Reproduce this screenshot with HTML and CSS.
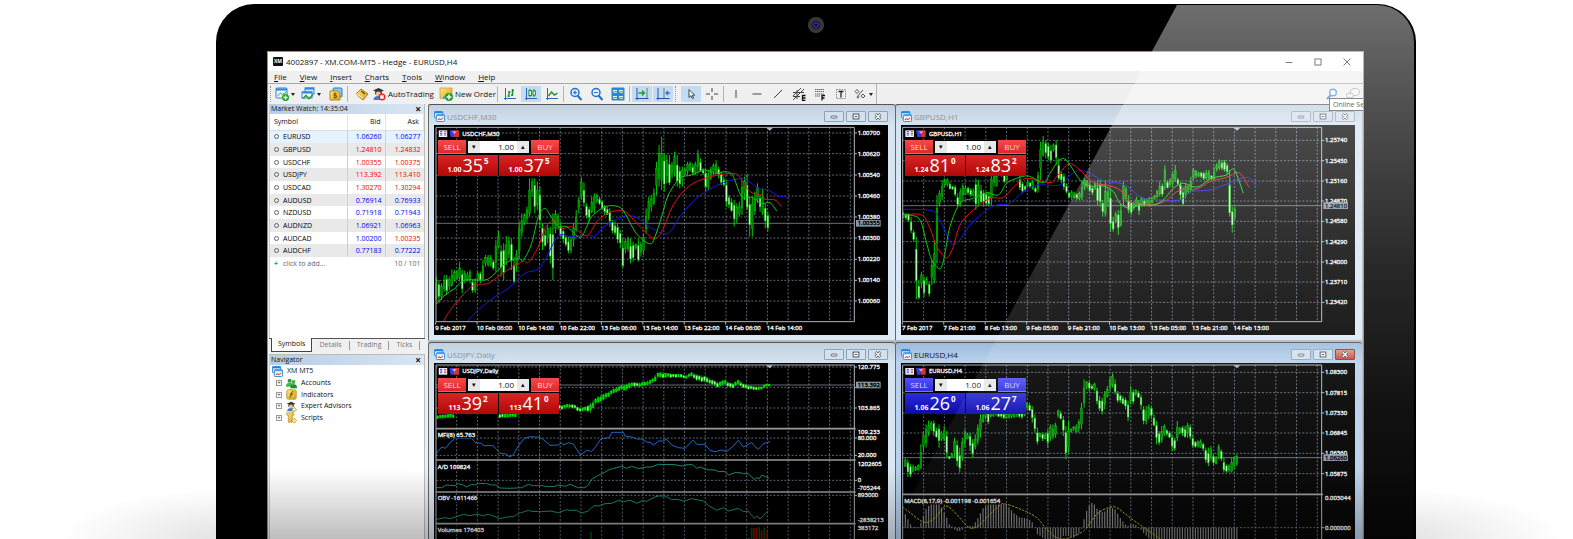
FILE: index.html
```
<!DOCTYPE html>
<html lang="en">
<head>
  <meta charset="UTF-8">
  <title>XM MT5 Terminal</title>
  <link rel="stylesheet" href="styles.css">
</head>
<body>
  <!-- shared icons -->
  <svg class="defs" aria-hidden="true">
    <defs>
      <linearGradient id="gold" x1="0" y1="0" x2="1" y2="1"><stop offset="0" stop-color="#ffe98a"/><stop offset="1" stop-color="#d9a014"/></linearGradient>
      <symbol id="i-win" viewBox="0 0 12 12">
        <rect x="0.5" y="0.5" width="9" height="7" rx="1" fill="#dff0ff" stroke="#2583dc"/><path d="M0.5 1.5h9" stroke="#2583dc" stroke-width="2"/>
        <rect x="2.5" y="4" width="9" height="7.5" rx="1" fill="#fff" stroke="#2583dc"/><path d="M2.5 5h9" stroke="#4aa5f0" stroke-width="1.6"/>
        <path d="M4 10l1.8-1.6 1.6 1.1L10 7.6" fill="none" stroke="#e0442c" stroke-width="1.1"/>
      </symbol>
      <symbol id="i-plus" viewBox="0 0 6 6"><circle cx="3" cy="3" r="3" fill="#1fa32b"/><path d="M3 1.2v3.6M1.2 3h3.6" stroke="#fff" stroke-width="1.1"/></symbol>
      <symbol id="i-expert" viewBox="0 0 14 14">
        <path d="M1 3.5L6.5 1l5.5 2.5L6.5 6z" fill="#333"/><path d="M3 4.5h7v3H3z" fill="#444"/><circle cx="6.3" cy="7" r="2.5" fill="#f0c190"/>
        <path d="M1.5 13c0-3 2-4 5-4s4 1 4 4z" fill="#3b7fd0"/>
      </symbol>
      <symbol id="i-depth" viewBox="0 0 28 22"><rect x="1" y="1" width="26" height="20" fill="#f4f6ff"/><path d="M5 5h7M5 10h7M5 15h7" stroke="#3558c8" stroke-width="3"/><path d="M17 5h7M17 10h7M17 15h7" stroke="#d94848" stroke-width="3"/></symbol>
      <symbol id="i-trade" viewBox="0 0 30 22"><path d="M0 1h14v20H4z" fill="#3a3ae0"/><path d="M14 1h15v20H14z" fill="#d23232"/><path d="M8 4h14l-7 8z" fill="#aab4e8"/></symbol>
      <symbol id="i-min" viewBox="0 0 20 11"><rect x="6.500" y="5" width="7" height="2.500" rx="1" fill="#fff" stroke="#4a515a"/></symbol>
      <symbol id="i-max" viewBox="0 0 20 11"><rect x="6.500" y="2.500" width="7" height="6" fill="#fff" stroke="#4a515a" stroke-width="1.200"/><path d="M8.500 5.500h3" stroke="#4a515a" stroke-width="1.500"/></symbol>
      <symbol id="i-close" viewBox="0 0 20 11"><path d="M7 2.500l6 6M13 2.500l-6 6" stroke="#4a515a" stroke-width="3.200"/><path d="M7.200 2.700l5.600 5.600M12.800 2.700l-5.600 5.600" stroke="#fff" stroke-width="1.500"/></symbol>
    </defs>
  </svg>

  <div class="hero">
    <div class="monitor">
      <span class="camera"></span>

      <div class="screen">
        <header class="titlebar">
          <span class="logo">XM</span>
          <h1>4002897 - XM.COM-MT5 - Hedge - EURUSD,H4</h1>
          <div class="win-controls">
            <button aria-label="Minimize"><svg viewBox="0 0 10 10"><path d="M1.5 5.5h7"/></svg></button>
            <button aria-label="Maximize"><svg viewBox="0 0 10 10"><rect x="2" y="2" width="6" height="6"/></svg></button>
            <button aria-label="Close"><svg viewBox="0 0 10 10"><path d="M1.5 1.5l7 7M8.5 1.5l-7 7"/></svg></button>
          </div>
        </header>

        <nav class="menubar">
          <a href="#"><u>F</u>ile</a>
          <a href="#"><u>V</u>iew</a>
          <a href="#"><u>I</u>nsert</a>
          <a href="#"><u>C</u>harts</a>
          <a href="#"><u>T</u>ools</a>
          <a href="#"><u>W</u>indow</a>
          <a href="#"><u>H</u>elp</a>
        </nav>

        <div class="toolbar">
          <span class="grip"></span>
          <button class="drop" aria-label="New chart">
            <svg viewBox="0 0 14 14"><rect x="1" y="1" width="11" height="10" rx="1" fill="#eaf6ff" stroke="#2a86d8"/><path d="M1 2.5h11" stroke="#2a86d8" stroke-width="2"/><path d="M2.5 9l3-3 2 1.5L11 5" fill="none" stroke="#3aa648"/><use href="#i-plus" x="7" y="7" width="7" height="7"/></svg>
          </button>
          <button class="drop" aria-label="Profiles">
            <svg viewBox="0 0 14 14"><rect x="4" y="1" width="9" height="6" fill="#cfe6fa" stroke="#2a86d8"/><path d="M4 1.500h9" stroke="#2a86d8" stroke-width="2"/><rect x="1" y="5" width="10" height="6" fill="#fff" stroke="#2a86d8"/><path d="M1 5.500h10" stroke="#2a86d8" stroke-width="2"/><path d="M2 11.500l3-3 3 3 4-4" fill="none" stroke="#2fa03c" stroke-width="1.600"/></svg>
          </button>
          <button class="files" aria-label="Market watch">
            <svg viewBox="0 0 14 14"><rect x="4" y="1" width="9" height="9" rx="1" fill="#8fc3f2" stroke="#2a78c8"/><path d="M1 4h8l2 2v7H1z" fill="url(#gold)" stroke="#b98a12"/><path d="M7.500 6.500H5v2h2.500v2H4.500M6 5.500v6" fill="none" stroke="#7d5a05"/></svg>
          </button>
          <span class="sep wide"></span>
          <button class="tag" aria-label="Navigator">
            <svg viewBox="0 0 14 14"><path d="M1 7l5-5 7 5-5 6z" fill="url(#gold)" stroke="#a87a14"/><path d="M1 7l7 4" stroke="#fff3b8"/><path d="M6 4l4 3" stroke="#6b4b08" stroke-width="1.500"/></svg>
          </button>
          <button class="auto">
            <svg viewBox="0 0 14 14"><use href="#i-expert"/><circle cx="10" cy="10" r="3.500" fill="#e02a20"/><rect x="8.300" y="8.300" width="3.400" height="3.400" fill="#fff"/></svg>
            AutoTrading
          </button>
          <button class="order">
            <svg viewBox="0 0 14 14"><path d="M1 1h12v9H4l-3 2z" fill="url(#gold)" stroke="#c49a2a" stroke-width=".7"/><path d="M4 12l3-3 2 1 4-2" fill="none" stroke="#2a86d8" stroke-width="1.500"/><use href="#i-plus" x="6" y="6" width="8" height="8"/></svg>
            New Order
          </button>
          <span class="sep"></span>
          <button aria-label="Bar chart"><svg viewBox="0 0 14 14"><path d="M2.500 1v12M1 11.500h12" stroke="#2f68b8"/><path d="M6 4v6M4.500 9H6M6 5h1.500M9.500 2v7M8 8h1.500M9.500 3.500H11" stroke="#1c8c2c" stroke-width="1.400"/></svg></button>
          <button class="on" aria-label="Candlesticks"><svg viewBox="0 0 14 14"><path d="M2.500 1v12M1 11.500h12" stroke="#2f68b8"/><path d="M6 2v8M10 2v8" stroke="#1c8c2c"/><rect x="5" y="3.500" width="2.400" height="5" fill="#fff" stroke="#1c8c2c"/><rect x="9" y="4" width="2.400" height="4" fill="#fff" stroke="#1c8c2c"/></svg></button>
          <button aria-label="Line chart"><svg viewBox="0 0 14 14"><path d="M2.500 1v12M1 11.500h12" stroke="#2f68b8"/><path d="M3.500 9l3-4 3 3 3-2" fill="none" stroke="#1c8c2c" stroke-width="1.400"/></svg></button>
          <span class="sep"></span>
          <button aria-label="Zoom in"><svg viewBox="0 0 14 14"><path d="M8.500 8.500l4 4.500" stroke="#1f6fd0" stroke-width="2"/><circle cx="6" cy="5.500" r="4" fill="#e6f3ff" stroke="#1f6fd0" stroke-width="1.500"/><path d="M4 5.500h4M6 3.500v4" stroke="#1f6fd0" stroke-width="1.200"/></svg></button>
          <button aria-label="Zoom out"><svg viewBox="0 0 14 14"><path d="M8.500 8.500l4 4.500" stroke="#1f6fd0" stroke-width="2"/><circle cx="6" cy="5.500" r="4" fill="#e6f3ff" stroke="#1f6fd0" stroke-width="1.500"/><path d="M4 5.500h4" stroke="#1f6fd0" stroke-width="1.200"/></svg></button>
          <button aria-label="Tile windows"><svg viewBox="0 0 14 14"><rect x="0.500" y="0.500" width="13" height="13" rx="1" fill="#2a86e0"/><path d="M2 3h4v3H2zM8 3h4v3H8zM2 9h4v3H2zM8 9h4v3H8z" fill="#e9ffe4"/><path d="M2 5.500l2-1 2 .5M8 5.500l2-1 2 .5M2 11.500l2-1 2 .5M8 11.500l2-1 2 .5" fill="none" stroke="#2ca03a"/></svg></button>
          <span class="sep"></span>
          <button class="on" aria-label="Auto scroll"><svg viewBox="0 0 14 14"><path d="M2 1v12M0.500 11.500h13" stroke="#2850a8"/><path d="M12 1v10" stroke="#777"/><path d="M3.500 6h6M7 3.500L9.500 6 7 8.500" fill="none" stroke="#1d9e2c" stroke-width="1.300"/></svg></button>
          <button class="on" aria-label="Chart shift"><svg viewBox="0 0 14 14"><path d="M2 1v12M0.500 11.500h13" stroke="#2850a8"/><path d="M8 1v10" stroke="#777"/><path d="M14 6h-4M12 4L10 6l2 2" fill="none" stroke="#2a78d8" stroke-width="1.300"/></svg></button>
          <span class="grip"></span>
          <button class="on" aria-label="Cursor"><svg viewBox="0 0 14 14"><path d="M5 2.500v8l2-1.800 1.500 3 1.200-.6-1.500-2.900h2.500z" fill="#fff" stroke="#444"/></svg></button>
          <button aria-label="Crosshair"><svg viewBox="0 0 14 14"><path d="M7 1v4M7 9v4M1 7h4M9 7h4" stroke="#444"/></svg></button>
          <span class="sep"></span>
          <button aria-label="Vertical line"><svg viewBox="0 0 14 14"><path d="M7 3v8" stroke="#444"/></svg></button>
          <button aria-label="Horizontal line"><svg viewBox="0 0 14 14"><path d="M2.500 7h9" stroke="#444"/></svg></button>
          <button aria-label="Trendline"><svg viewBox="0 0 14 14"><path d="M3 11l8-8" stroke="#444"/></svg></button>
          <button aria-label="Equidistant channel"><svg viewBox="0 0 14 14"><path d="M1 9l8-8M1 13L12 2M1 5.500h11M1 9.500h7M5 3v9" stroke="#444"/><path d="M13.500 8.500h-3v5h3M10.500 11h3" fill="none" stroke="#111" stroke-width="1.300"/></svg></button>
          <button aria-label="Fibonacci retracement"><svg viewBox="0 0 14 14"><path d="M2 2.500h9M2 4.500h9M2 7h9M2 9h5" stroke="#666" stroke-dasharray="1.500 .5"/><path d="M12 8.500H9v5M9 11h2.500" fill="none" stroke="#111" stroke-width="1.300"/></svg></button>
          <button aria-label="Text"><svg viewBox="0 0 14 14"><rect x="2.500" y="2.500" width="9" height="9" fill="none" stroke="#888" stroke-dasharray="1.500 1"/><path d="M4.500 4.500h5M7 4.500v6" stroke="#222" stroke-width="1.300"/></svg></button>
          <button class="drop shapes" aria-label="Objects"><svg viewBox="0 0 14 14"><path d="M2 4.500l2-2 2 2-2 2zM8 9l2-2 2 2-2 2zM4 10l6-7" fill="none" stroke="#555"/><circle cx="5" cy="10" r="1.500" fill="#888"/></svg></button>
          <span class="tool-end"></span>
          <div class="tool-right">
            <button aria-label="Search"><svg viewBox="0 0 14 14"><path d="M6 8L2 12" stroke="#4a78b8" stroke-width="2"/><circle cx="8" cy="5.500" r="3.300" fill="#fff" stroke="#4a8ad8" stroke-width="1.400"/></svg></button>
            <button aria-label="Chat"><svg viewBox="0 0 14 14"><ellipse cx="9" cy="5" rx="4.500" ry="3.500" fill="#f6f6f6" stroke="#aaa"/><ellipse cx="4" cy="8.500" rx="3.500" ry="2.500" fill="#f6f6f6" stroke="#aaa"/></svg></button>
            <span class="tooltip">Online Se</span>
          </div>
        </div>

        <div class="main">
          <aside class="sidebar">
            <section class="market">
              <h2>Market Watch: 14:35:04 <button aria-label="Close market watch">×</button></h2>
              <table>
                <thead><tr><th>Symbol</th><th>Bid</th><th>Ask</th></tr></thead>
                <tbody>
                  <tr class="hot up"><td>EURUSD</td><td>1.06260</td><td>1.06277</td></tr>
                  <tr class="down"><td>GBPUSD</td><td>1.24810</td><td>1.24832</td></tr>
                  <tr class="down"><td>USDCHF</td><td>1.00355</td><td>1.00375</td></tr>
                  <tr class="down"><td>USDJPY</td><td>113.392</td><td>113.410</td></tr>
                  <tr class="down"><td>USDCAD</td><td>1.30270</td><td>1.30294</td></tr>
                  <tr class="up"><td>AUDUSD</td><td>0.76914</td><td>0.76933</td></tr>
                  <tr class="up"><td>NZDUSD</td><td>0.71918</td><td>0.71943</td></tr>
                  <tr class="up"><td>AUDNZD</td><td>1.06921</td><td>1.06963</td></tr>
                  <tr class="up"><td>AUDCAD</td><td>1.00200</td><td class="fall">1.00235</td></tr>
                  <tr class="up"><td>AUDCHF</td><td>0.77183</td><td>0.77222</td></tr>
                </tbody>
                <tfoot><tr><td>click to add...</td><td colspan="2">10 / 101</td></tr></tfoot>
              </table>
            </section>
            <div class="tabs">
              <a class="active" href="#">Symbols</a>
              <a href="#">Details</a>
              <a href="#">Trading</a>
              <a href="#">Ticks</a>
            </div>
            <section class="navigator">
              <h2>Navigator <button aria-label="Close navigator">×</button></h2>
              <p><svg viewBox="0 0 12 12"><use href="#i-win"/></svg>XM MT5</p>
              <ul>
                <li><svg viewBox="0 0 14 14"><circle cx="4.500" cy="3.500" r="2.500" fill="#2f9e3a"/><path d="M0 11c0-4 2-5 5-5s4 2 4 5z" fill="#3bb848"/><circle cx="9.500" cy="5" r="2.500" fill="#3fae3a"/><path d="M5.500 13c0-4 2-5 4.500-5s4 1 4 5z" fill="#1f8c2b"/></svg>Accounts</li>
                <li><svg viewBox="0 0 14 14"><rect x="1" y="1" width="12" height="12" rx="2" fill="url(#gold)" stroke="#b98a12"/><path d="M9.500 3.500c-2-.5-2.500 1-3 3.500s-.5 4-2.500 3.500M5 6.500h4" fill="none" stroke="#5a4206" stroke-width="1.200"/></svg>Indicators</li>
                <li><svg viewBox="0 0 14 14"><use href="#i-expert"/><path d="M10.500 8l3 3-3 3-3-3z" fill="#fff3b0" stroke="#b98a12"/></svg>Expert Advisors</li>
                <li><svg viewBox="0 0 14 14"><path d="M1 1h9v3H8v9H3V4H1z" fill="url(#gold)" stroke="#c49a2a"/><path d="M10.500 8l3 3-3 3-3-3z" fill="#fff3b0" stroke="#b98a12"/></svg>Scripts</li>
              </ul>
            </section>
          </aside>

          <main class="charts">
            <section class="chart-win">
              <header>
                <svg viewBox="0 0 12 12"><use href="#i-win"/></svg><h3>USDCHF,M30</h3>
                <button aria-label="Minimize"><svg viewBox="0 0 20 11"><use href="#i-min"/></svg></button>
                <button aria-label="Restore"><svg viewBox="0 0 20 11"><use href="#i-max"/></svg></button>
                <button aria-label="Close"><svg viewBox="0 0 20 11"><use href="#i-close"/></svg></button>
              </header>
              <div class="plot">
                <svg id="usdchf" viewBox="27 75 1362 630"></svg>
                <form class="ticket">
                  <button type="button" class="side">SELL</button>
                  <div class="lots"><button type="button" aria-label="Less">▾</button><input type="text" value="1.00" aria-label="Volume"><button type="button" aria-label="More">▴</button></div>
                  <button type="button" class="side">BUY</button>
                  <button type="button" class="price"><b>1.00</b><span>35</span><sup>5</sup></button>
                  <button type="button" class="price"><b>1.00</b><span>37</span><sup>5</sup></button>
                </form>
              </div>
            </section>

            <section class="chart-win">
              <header>
                <svg viewBox="0 0 12 12"><use href="#i-win"/></svg><h3>GBPUSD,H1</h3>
                <button aria-label="Minimize"><svg viewBox="0 0 20 11"><use href="#i-min"/></svg></button>
                <button aria-label="Restore"><svg viewBox="0 0 20 11"><use href="#i-max"/></svg></button>
                <button aria-label="Close"><svg viewBox="0 0 20 11"><use href="#i-close"/></svg></button>
              </header>
              <div class="plot">
                <svg id="gbpusd" viewBox="33 75 1362 630"></svg>
                <form class="ticket">
                  <button type="button" class="side">SELL</button>
                  <div class="lots"><button type="button" aria-label="Less">▾</button><input type="text" value="1.00" aria-label="Volume"><button type="button" aria-label="More">▴</button></div>
                  <button type="button" class="side">BUY</button>
                  <button type="button" class="price"><b>1.24</b><span>81</span><sup>0</sup></button>
                  <button type="button" class="price"><b>1.24</b><span>83</span><sup>2</sup></button>
                </form>
              </div>
            </section>

            <section class="chart-win">
              <header>
                <svg viewBox="0 0 12 12"><use href="#i-win"/></svg><h3>USDJPY,Daily</h3>
                <button aria-label="Minimize"><svg viewBox="0 0 20 11"><use href="#i-min"/></svg></button>
                <button aria-label="Restore"><svg viewBox="0 0 20 11"><use href="#i-max"/></svg></button>
                <button aria-label="Close"><svg viewBox="0 0 20 11"><use href="#i-close"/></svg></button>
              </header>
              <div class="plot">
                <svg id="usdjpy" viewBox="27 66 1362 630"></svg>
                <form class="ticket">
                  <button type="button" class="side">SELL</button>
                  <div class="lots"><button type="button" aria-label="Less">▾</button><input type="text" value="1.00" aria-label="Volume"><button type="button" aria-label="More">▴</button></div>
                  <button type="button" class="side">BUY</button>
                  <button type="button" class="price"><b>113</b><span>39</span><sup>2</sup></button>
                  <button type="button" class="price"><b>113</b><span>41</span><sup>0</sup></button>
                </form>
              </div>
            </section>

            <section class="chart-win current">
              <header>
                <svg viewBox="0 0 12 12"><use href="#i-win"/></svg><h3>EURUSD,H4</h3>
                <button aria-label="Minimize"><svg viewBox="0 0 20 11"><use href="#i-min"/></svg></button>
                <button aria-label="Restore"><svg viewBox="0 0 20 11"><use href="#i-max"/></svg></button>
                <button class="close" aria-label="Close"><svg viewBox="0 0 20 11"><use href="#i-close"/></svg></button>
              </header>
              <div class="plot">
                <svg id="eurusd" viewBox="33 66 1362 630"></svg>
                <form class="ticket blue">
                  <button type="button" class="side">SELL</button>
                  <div class="lots"><button type="button" aria-label="Less">▾</button><input type="text" value="1.00" aria-label="Volume"><button type="button" aria-label="More">▴</button></div>
                  <button type="button" class="side">BUY</button>
                  <button type="button" class="price"><b>1.06</b><span>26</span><sup>0</sup></button>
                  <button type="button" class="price"><b>1.06</b><span>27</span><sup>7</sup></button>
                </form>
              </div>
            </section>
          </main>
        </div>
      </div>

      <div class="glare"></div>
    </div>
    <div class="fade"></div>
  </div>

  <script src="charts.js"></script>
</body>
</html>
```
FILE: styles.css
```
*, *::before, *::after {
  box-sizing: border-box;
}

body {
  margin: 0;
  background: #fff;
  font-family: "Open Sans", "Noto Sans", sans-serif;
  font-size: 7px;
  line-height: 10px;
  color: #111;
}

h1, h2, h3, p, ul {
  margin: 0;
  padding: 0;
  font-size: inherit;
  font-weight: normal;
}

a {
  color: inherit;
  text-decoration: none;
}

button, input {
  font: inherit;
  color: inherit;
  border: 0;
  padding: 0;
  margin: 0;
  background: none;
}

.defs {
  position: absolute;
  width: 0;
  height: 0;
}

.hero {
  position: relative;
  height: 100vh;
  overflow: hidden;
  padding: 4px 157px 0 216px;
  background:
    radial-gradient(ellipse 170px 50px at calc(100% - 180px) 100%, #e2e2e2, rgba(255,255,255,0)),
    radial-gradient(ellipse 170px 50px at 230px 100%, #e2e2e2, rgba(255,255,255,0));
}

/* monitor */
.monitor {
  position: relative;
  padding: 47px 52px 0 51px;
  background: #000;
  border-radius: 38px 38px 0 0;
  overflow: hidden;
}

.camera {
  position: absolute;
  top: 13px;
  left: 50%;
  width: 16px;
  height: 16px;
  margin-left: -8px;
  border-radius: 50%;
  background: radial-gradient(circle, #0a0a30 0 1px, #3b35c8 2px, #16163a 3px, #2c2c2c 4px, #3c3c3c 7px);
}

.glare {
  position: absolute;
  inset: 1px 2px 0 0;
  border-radius: 0 37px 0 0;
  background: linear-gradient(rgba(255,255,255,.43), rgba(255,255,255,.3) 110px, rgba(255,255,255,.16) 260px, rgba(255,255,255,.07) 400px, rgba(255,255,255,.02) 540px);
  clip-path: polygon(961px 0, 100% 0, 100% 100%, 651px 100%);
  pointer-events: none;
}

.fade {
  position: absolute;
  left: 216px;
  right: 157px;
  bottom: 0;
  height: 70px;
  background: linear-gradient(rgba(0,0,0,0), rgba(0,0,0,.26));
  pointer-events: none;
}

.screen {
  border: 1px solid #5b9bd8;
  border-bottom: 0;
  background: #f0f0f0;
  overflow: hidden;
}

/* title bar and menu */
.titlebar {
  display: flex;
  align-items: center;
  height: 19px;
  padding: 0 2px 0 5px;
  background: #fff;
  font-size: 8px;
}

.logo {
  width: 10px;
  height: 9px;
  margin-right: 3px;
  border-radius: 1px;
  background: #111;
  color: #fff;
  font-size: 5px;
  font-weight: bold;
  line-height: 9px;
  text-align: center;
}

.win-controls {
  display: flex;
  margin-left: auto;
}

.win-controls button {
  width: 29px;
  height: 10px;
}

.win-controls svg {
  display: block;
  width: 10px;
  height: 10px;
  margin: 0 auto;
  fill: none;
  stroke: #333;
}

.menubar {
  display: flex;
  gap: 13px;
  height: 13px;
  padding: 0 6px;
  border-bottom: 1px solid #a8a8a8;
  font-size: 8px;
  line-height: 12px;
}

/* toolbar */
.toolbar {
  display: flex;
  align-items: center;
  height: 20px;
  font-size: 8px;
}

.toolbar button {
  display: flex;
  flex: none;
  align-items: center;
  justify-content: center;
  width: 21px;
  height: 16px;
  white-space: nowrap;
}

.toolbar button svg {
  flex: none;
  width: 14px;
  height: 14px;
}

.toolbar .on {
  background: #c2dcf4;
  border-left: 1px solid #f0f0f0;
}

.toolbar .drop {
  width: 26px;
  justify-content: flex-start;
}

.toolbar .drop::after {
  content: "";
  margin-left: 2px;
  border: 2px solid transparent;
  border-top: 3px solid #222;
  border-bottom: 0;
}

.toolbar .shapes {
  width: 25px;
  padding-left: 2px;
}

.toolbar .files {
  width: 17px;
}

.toolbar .auto {
  justify-content: flex-start;
  gap: 2px;
  width: 67px;
}

.toolbar .order {
  justify-content: flex-start;
  gap: 2px;
  width: 57px;
}

.grip {
  flex: none;
  width: 2px;
  height: 16px;
  margin: 0 3px 0 2px;
  border-left: 1px dotted #999;
}

.sep {
  flex: none;
  width: 1px;
  height: 16px;
  margin: 0 1px;
  background: #b4b4b4;
}

.sep.wide {
  margin: 0 3px;
}

.tool-end {
  width: 1px;
  height: 20px;
  background: #b4b4b4;
}

.tool-right {
  position: relative;
  display: flex;
  margin-left: auto;
}

.tooltip {
  position: absolute;
  top: 12px;
  left: 8px;
  padding: 0 3px;
  border: 1px solid #888;
  border-right: 0;
  background: #fff;
  color: #666;
  font-size: 7px;
  line-height: 11px;
  white-space: nowrap;
  z-index: 2;
}

/* sidebar */
.main {
  display: grid;
  grid-template-columns: 160px 1fr;
}

.sidebar {
  padding: 0 3px 0 1px;
  display: flex;
  flex-direction: column;
}

.sidebar h2 {
  display: flex;
  justify-content: space-between;
  height: 10px;
  padding: 0 3px 0 1px;
  background: linear-gradient(90deg, #b9cde2, #d8e6f5);
  line-height: 9px;
}

.sidebar h2 button {
  font-size: 10px;
  font-weight: bold;
  line-height: 8px;
}

.market {
  height: 234px;
  border-right: 1px solid #bbb;
  border-left: 1px solid #ccc;
  background: #fff;
}

.market table {
  width: 100%;
  table-layout: fixed;
  border-collapse: collapse;
}

.market th {
  height: 16px;
  padding: 0 4px;
  border-right: 1px solid #e3e3e3;
  border-bottom: 1px solid #ddd;
  font-weight: normal;
  text-align: right;
}

.market th:first-child {
  width: 77px;
  text-align: left;
}

.market th:nth-child(2) {
  width: 38px;
}

.market td {
  height: 13px;
  padding: 0 3px;
  border-right: 1px solid #d0d0d0;
  line-height: 11px;
  text-align: right;
}

.market td:last-child {
  border-right: 0;
}

.market tbody tr:nth-child(3n) td {
  height: 12px;
}

.market tbody tr:nth-child(even) {
  background: #e9e9e9;
}

.market tbody .hot {
  background: #e5f3ff;
}

.market td:first-child {
  text-align: left;
}

.market tbody td:first-child {
  color: #000;
}

.market tbody td:first-child::before {
  content: "";
  display: inline-block;
  width: 5px;
  height: 5px;
  margin: 0 4px 0 1px;
  border: 1px solid #666;
  border-radius: 50%;
}

.up {
  color: #0000f0;
}

.down, .fall {
  color: #f00000;
}

.market tfoot td {
  border: 0;
  color: #666;
}

.market tfoot td:first-child::before {
  content: "+";
  margin: 0 5px 0 1px;
  color: #16a316;
  font-weight: bold;
}

.tabs {
  display: flex;
  height: 16px;
  padding-left: 2px;
  border-top: 1px solid #555;
  color: #777;
}

.tabs a {
  height: 12px;
  padding: 0 7px;
  border-right: 1px solid #999;
  line-height: 12px;
}

.tabs a:not(.active) {
  height: 9px;
  margin-top: 2px;
  line-height: 8px;
}

.tabs .active {
  margin-top: -1px;
  height: 14px;
  border: 1px solid #444;
  border-top: 0;
  background: #fff;
  color: #111;
  padding: 0 6px;
}

.navigator {
  flex: 1;
  border-right: 1px solid #bbb;
  border-left: 1px solid #ccc;
  border-top: 1px solid #bbb;
  background: #fff;
}

.navigator p {
  display: flex;
  align-items: center;
  gap: 4px;
  height: 12px;
  padding-left: 2px;
}

.navigator p svg {
  width: 11px;
  height: 11px;
}

.navigator ul {
  margin-left: 6px;
  list-style: none;
}

.navigator li {
  display: flex;
  align-items: center;
  gap: 4px;
  height: 12px;
}

.navigator li:nth-child(even) {
  height: 11px;
}

.navigator li::before {
  content: "+";
  width: 6px;
  height: 6px;
  border: 1px solid #999;
  color: #335;
  font-size: 6px;
  line-height: 4px;
  text-align: center;
}

.navigator li svg {
  width: 11px;
  height: 11px;
}

/* chart windows */
.charts {
  display: grid;
  grid-template-columns: 1fr 1fr;
  row-gap: 2px;
  padding-right: 1px;
  background: #b8b8b8;
}

.chart-win {
  min-width: 0;
  padding: 0 7px 5px 5px;
  border-top: 1px solid #555;
  border-left: 1px solid #666;
  border-radius: 3px 3px 0 0;
  background: linear-gradient(#c3d1de, #d6e3f1 20px, #dce9f7);
}

.chart-win.current {
  background: linear-gradient(#9dbbdc, #bad2ec 20px, #b5cfeb);
}

.chart-win header {
  display: flex;
  align-items: center;
  gap: 2px;
  height: 20px;
  padding-top: 3px;
}

.chart-win header > svg {
  width: 11px;
  height: 11px;
}

.chart-win h3 {
  margin-right: auto;
  font-size: 8px;
  color: #8a929b;
}

.chart-win.current h3 {
  color: #111;
}

.chart-win header button {
  width: 20px;
  height: 11px;
  border: 1px solid #8fa3b8;
  border-radius: 1px;
  background: #d3e0ed;
}

.chart-win header button svg {
  display: block;
  width: 18px;
  height: 9px;
}

.chart-win header .close {
  border-color: #8c3a30;
  background: linear-gradient(#e0968a, #c8452e);
}

.plot {
  position: relative;
  background: #000;
}

.plot > svg {
  display: block;
  width: 100%;
  height: 210px;
}

/* svg units are a third of a pixel */
.plot text {
  font-size: 18px;
  fill: #f0f0f0;
  stroke: #f0f0f0;
  stroke-width: 1;
}

.plot .quote {
  fill: #000;
  stroke: #000;
}

.grid {
  stroke: #75828f;
  stroke-width: 2.4;
  stroke-dasharray: 6 5;
}

.frame {
  fill: none;
  stroke: #b4b4b4;
  stroke-width: 3;
}

.split {
  stroke: #9a9a9a;
  stroke-width: 5;
}

.last {
  stroke: #7d8792;
  stroke-width: 2.4;
}

.line {
  fill: none;
  stroke-width: 3;
}

/* one click trading */
.ticket {
  position: absolute;
  top: 15px;
  left: 4px;
  display: grid;
  grid-template-columns: 28px minmax(0, 1fr) 28px;
  grid-template-rows: 14px 21px;
  row-gap: 1px;
  width: 121px;
  color: #fff;
  background: #000;
}

.ticket .side {
  border-bottom: 1px solid #f06060;
  background: linear-gradient(#f54a4a, #dd2828);
  font-size: 8px;
  color: #ffd9d9;
}

.lots {
  display: flex;
  height: 12px;
  margin: 1px 2px;
  background: #fff;
  color: #111;
}

.lots button {
  width: 12px;
  background: #e8e8e8;
  line-height: 8px;
}

.lots input {
  flex: 1;
  width: 100%;
  min-width: 0;
  padding-right: 3px;
  font-size: 8px;
  text-align: right;
}

.ticket .price {
  display: flex;
  align-items: baseline;
  justify-content: center;
  gap: 1px;
  width: 60px;
  height: 21px;
  background: linear-gradient(#d92424, #b00808);
  grid-column: 1 / 3;
  grid-row: 2;
}

.ticket .price:last-child {
  grid-column: 1 / 4;
  justify-self: end;
}

.price b {
  font-size: 7px;
}

.price span {
  font-size: 18px;
  line-height: 20px;
}

.price sup {
  align-self: flex-start;
  font-size: 8px;
  font-weight: bold;
  line-height: 12px;
}

.ticket.blue .side {
  border-bottom-color: #7878f0;
  background: linear-gradient(#5252f2, #3030dc);
  color: #dcdcff;
}

.ticket.blue .price {
  background: linear-gradient(#2c2cd8, #0a0aa8);
}
```
FILE: charts.js
```
// candles are "x high low", lines are "x,y" pairs, all in svg units
const charts = {
  usdchf: {
    left: 33, right: 1288, top: 82, bottom: 665, gridX: 95, name: "USDCHF,M30",
    rows: [99, 161, 225, 288, 351, 414, 478, 541, 603],
    prices: ["1.00700", "1.00620", "1.00540", "1.00460", "1.00380", "1.00300", "1.00220", "1.00140", "1.00060"],
    times: ["9 Feb 2017", "10 Feb 06:00", "10 Feb 14:00", "10 Feb 22:00", "13 Feb 06:00", "13 Feb 14:00", "13 Feb 22:00", "14 Feb 06:00", "14 Feb 14:00"],
    last: [370, "1.00355"],
    smooth: true,
    candles: "34 530 600,41 540 610,49 550 600,57 525 575,65 525 585,73 530 570,80 508 560,88 510 545,96 510 540,103 485 545,111 510 580,119 512 550,127 515 545,135 510 550,142 540 578,150 535 578,157 515 545,165 515 550,172 480 540,180 465 500,188 465 500,196 465 500,204 480 510,211 420 515,218 393 445,226 435 530,234 430 540,242 408 495,250 410 475,257 415 510,265 470 550,273 450 515,281 365 475,288 340 410,296 340 375,304 320 370,312 235 350,320 235 290,328 235 340,336 245 330,343 260 385,351 370 450,359 390 440,367 375 430,375 380 490,382 340 540,390 330 400,398 340 390,405 365 410,413 385 430,421 405 440,429 410 460,437 410 460,445 370 440,452 330 395,460 290 340,468 232 300,475 248 320,483 310 355,491 320 365,499 290 340,507 280 340,515 280 310,522 290 315,530 300 330,538 315 345,546 320 345,553 325 380,561 360 400,569 365 405,577 370 430,584 390 445,592 415 505,600 415 460,608 410 455,616 415 490,624 425 485,631 430 450,639 415 485,647 425 470,655 400 465,663 325 400,670 290 360,678 285 335,686 265 315,692 185 285,700 135 260,708 110 270,716 160 275,724 165 250,731 165 255,739 185 235,747 155 230,755 165 260,763 200 265,770 200 260,778 200 225,786 185 225,793 185 215,801 190 225,809 185 225,817 150 220,824 175 215,832 205 225,840 205 275,848 210 270,856 200 240,863 190 225,871 180 220,879 200 235,886 215 255,894 230 260,902 240 320,910 285 325,918 295 335,926 300 380,933 310 370,941 305 350,949 240 345,956 230 300,964 222 330,972 290 410,980 290 410,988 275 345,995 250 310,1003 285 335,1011 265 345,1019 310 385,1026 335 395,1034 365 378",
    lines: [
      ["#1818e0", "127,665 160,630 210,590 250,565 300,520 335,510 360,480 400,408 440,410 490,405 510,408 540,378 590,352 630,350 680,385 720,402 740,390 765,350 820,290 890,250 940,237 965,240 1000,265 1030,270 1060,288 1080,290 1095,302"],
      ["#e01414", "55,665 80,625 140,560 190,550 225,525 290,485 310,487 340,440 360,385 385,362 410,385 440,380 470,400 490,405 520,360 560,335 600,335 640,375 680,413 692,415 710,395 745,315 790,260 850,232 920,220 945,232 975,275 1010,285 1020,298 1050,300 1070,320"],
      ["#14c814", "34,612 60,585 90,565 120,540 180,540 210,520 240,490 280,475 295,480 320,430 340,350 360,325 375,345 400,380 425,380 465,412 485,380 500,350 540,320 580,320 600,340 630,395 660,425 680,430 692,405 710,350 730,285 765,235 800,225 840,210 870,220 905,215 925,230 950,290 980,292 1010,310 1035,308 1055,333"]
    ]
  },
  gbpusd: {
    left: 38, right: 1295, top: 82, bottom: 665, gridX: 101, name: "GBPUSD,H1",
    rows: [121, 182, 243, 303, 364, 425, 486, 546, 607],
    prices: ["1.25740", "1.25450", "1.25160", "1.24870", "1.24580", "1.24290", "1.24000", "1.23710", "1.23420"],
    times: ["7 Feb 2017", "7 Feb 21:00", "8 Feb 13:00", "9 Feb 05:00", "9 Feb 21:00", "10 Feb 13:00", "13 Feb 05:00", "13 Feb 21:00", "14 Feb 13:00"],
    last: [317, "1.24810"],
    smooth: true,
    candles: "40 335 355,47 340 360,55 340 365,62 350 400,70 390 425,77 410 598,85 540 598,93 515 565,100 530 590,108 530 555,116 545 590,124 480 555,131 420 550,139 285 490,147 270 320,154 240 300,162 235 260,170 235 260,178 245 268,186 258 270,193 255 290,201 280 320,209 265 320,217 250 300,225 255 285,233 260 285,241 265 290,249 265 290,256 235 330,264 240 320,272 255 310,280 270 320,288 275 318,295 275 320,303 220 315,311 215 260,319 215 260,327 200 225,338 205 232,345 215 250,353 215 245,361 200 225,382 200 225,390 225 270,398 245 280,405 255 275,413 240 260,420 245 265,428 240 270,436 260 278,443 215 278,450 125 240,458 108 170,466 120 175,474 130 180,482 135 190,489 130 155,497 120 195,505 175 240,513 215 250,520 220 270,528 250 280,536 275 295,544 270 300,551 275 295,559 280 300,567 275 300,575 245 300,582 235 270,590 240 265,598 245 275,606 260 285,613 245 270,621 240 315,629 240 320,636 300 350,644 240 350,652 265 320,660 270 395,668 350 395,675 335 370,683 330 405,691 310 380,698 245 320,706 260 305,714 285 340,722 300 345,730 305 330,738 290 320,745 300 345,753 290 320,760 295 320,768 295 315,776 290 320,784 290 310,792 285 300,800 270 295,807 245 290,815 250 290,823 195 270,830 240 265,838 235 260,846 215 260,853 195 245,861 235 255,869 245 300,877 260 315,885 250 295,893 255 280,900 230 275,908 205 240,916 210 235,924 215 230,932 215 235,940 215 240,947 210 240,955 210 240,963 225 240,971 200 240,978 190 215,986 178 210,994 180 210,1001 180 215,1009 190 225,1017 210 350,1024 320 398,1032 320 360,1040 297 360",
    lines: [
      ["#1818e0", "38,328 125,332 150,360 180,425 195,432 210,420 240,375 290,330 320,315 360,310 400,275 440,255 510,255 540,225 570,212 600,220 640,243 690,250 720,265 755,293 810,300 870,300 905,275 960,270 1010,252 1070,232 1100,258"],
      ["#e01414", "38,345 95,345 120,385 140,440 165,472 175,470 190,440 210,375 250,330 300,295 340,293 370,262 410,235 480,248 500,230 530,195 545,192 570,210 610,248 650,255 690,270 720,305 750,312 800,312 830,300 870,270 920,267 960,245 1010,232 1040,218 1055,225 1078,263"],
      ["#14c814", "38,343 60,345 90,360 110,430 125,480 145,505 155,500 165,460 180,380 210,310 250,295 290,278 325,285 350,250 380,235 415,228 460,248 480,220 500,190 520,175 540,195 570,240 600,258 640,258 670,275 690,310 720,325 750,315 790,315 820,300 850,265 880,250 910,260 930,258 965,235 1010,225 1020,212 1035,212 1060,280"]
    ]
  },
  usdjpy: {
    left: 33, right: 1288, top: 72, bottom: 720, gridX: 95, name: "USDJPY,Daily",
    rows: [78, 139, 201, 291, 343, 418, 463],
    prices: ["120.775", "", "103.865", "80.000", "20.000", "0", "893000"],
    extra: [["109.233", 274], ["1202605", 370], ["-705244", 440], ["-2838213", 536], ["383172", 560]],
    notes: [["MFI(8) 65.763", 288], ["A/D 109824", 383], ["OBV -1611466", 478], ["Volumes 176403", 573]],
    splits: [263, 357, 453, 548],
    last: [132, "113.392"],
    bright: true,
    candles: "38 222 234,60 219 232,88 218 230,96 195 210,215 195 210,225 218 232,275 216 228,290 190 205,400 190 206,415 192 205,430 187 199,450 191 204,465 201 214,480 196 209,495 188 218,510 172 192,530 160 182,550 152 168,570 140 156,590 132 147,605 128 150,620 122 137,640 125 138,660 121 135,680 115 128,690 103 122,700 92 110,715 94 112,730 96 109,750 99 111,765 97 109,780 104 114,800 93 107,815 100 120,840 104 124,860 115 131,880 123 140,900 114 130,910 124 140,925 126 141,940 116 130,955 127 142,970 132 145,990 136 148,1010 136 147,1020 128 138,1035 128 136",
    lines: [
      ["#1e68c0", "34,337 50,318 62,322 75,305 90,292 140,292 150,304 170,307 175,314 205,314 212,323 225,337 240,338 255,348 265,340 280,315 297,293 315,287 345,289 360,300 375,313 400,312 410,305 415,312 430,305 445,309 455,325 467,342 485,328 500,331 510,320 528,293 553,290 560,274 595,274 600,285 620,288 635,294 650,294 665,303 680,306 685,313 700,300 718,300 723,293 740,312 760,320 780,322 805,297 815,310 840,310 855,328 870,332 890,327 905,332 925,315 940,298 955,318 980,305 990,317 1000,325 1015,308 1035,302"],
      ["#1c8478", "34,440 50,440 65,432 90,434 100,428 115,432 125,438 140,430 150,432 160,427 185,428 200,432 212,432 225,441 255,442 290,440 310,430 325,434 350,434 370,437 390,436 400,432 420,436 435,430 460,440 480,440 490,432 500,415 520,403 540,393 555,385 575,380 590,376 605,382 620,376 640,383 665,378 680,378 700,370 750,371 765,374 775,375 790,370 805,372 815,382 825,378 845,386 870,387 880,392 900,391 910,402 930,395 945,395 955,398 970,398 988,416 993,410 1003,413 1010,402 1032,412"],
      ["#1c8478", "34,535 60,530 75,533 95,527 115,520 135,524 155,520 175,524 190,520 210,527 225,533 245,528 265,527 280,518 310,508 320,511 350,512 375,510 400,515 425,506 435,508 455,508 470,516 490,510 500,500 510,493 520,495 540,488 560,487 580,478 595,482 615,478 635,487 655,478 665,481 690,468 700,465 720,465 740,476 760,475 775,481 800,473 820,477 835,480 850,493 875,508 895,500 910,510 940,502 955,512 970,510 988,532 995,525 1005,534 1030,508"]
    ],
    volumes: [[498, 572, "#064a06"], [972, 590, "#064a06"], [980, 560, "#064a06"], [987, 562, "#8a0808"], [995, 560, "#8a0808"], [1003, 558, "#064a06"], [1010, 568, "#8a0808"], [1018, 560, "#064a06"], [1026, 572, "#8a0808"]]
  },
  eurusd: {
    left: 38, right: 1295, top: 72, bottom: 720, gridX: 101, name: "EURUSD,H4",
    rows: [94, 155, 216, 276, 337, 398, 560],
    prices: ["1.08300", "1.07815", "1.07330", "1.06845", "1.06360", "1.05875", "0.000000"],
    extra: [["0.003044", 471]],
    notes: [["MACD(8,17,9) -0.001198 -0.001654", 486]],
    splits: [460],
    last: [350, "1.06260"],
    candles: "46 350 378,54 355 408,62 370 408,70 370 395,78 375 390,86 370 390,93 310 385,101 270 335,109 250 320,116 238 285,124 240 270,132 238 285,140 260 290,147 250 320,155 270 300,163 255 300,170 270 350,178 345 355,186 335 350,194 290 350,201 298 375,209 320 395,217 290 360,225 265 320,232 275 295,240 275 330,248 295 350,256 280 325,264 250 310,272 220 290,280 212 245,288 212 235,296 212 250,304 205 230,320 200 225,340 215 235,365 212 232,380 205 228,400 205 235,413 180 200,420 185 210,428 195 245,436 220 275,444 260 310,451 275 290,459 275 300,467 275 295,475 265 320,482 250 300,490 250 295,498 245 290,505 205 230,513 210 235,521 225 285,528 255 355,536 240 335,544 262 275,552 255 270,560 250 275,567 235 275,575 185 265,583 115 200,590 120 145,598 120 150,606 130 145,613 125 150,621 140 190,629 165 210,637 170 220,644 150 205,652 135 170,660 108 150,668 97 140,676 115 160,683 150 185,691 160 185,699 165 190,706 170 205,714 180 240,722 135 190,730 145 190,737 145 165,745 150 170,753 160 205,761 195 250,768 195 250,776 190 235,784 195 235,792 220 255,800 240 310,807 270 312,815 255 305,823 250 285,831 265 285,838 270 290,846 280 330,854 290 330,861 240 300,869 258 280,877 255 285,885 255 290,893 245 290,900 250 295,908 280 320,916 300 320,924 298 320,932 295 320,940 305 330,947 320 365,955 320 375,963 315 360,971 340 375,978 345 370,986 310 355,994 325 360,1001 350 395,1009 370 395,1017 370 395,1025 350 395,1032 345 385,1040 340 375",
    lines: [],
    macd: "46,520 54,535 62,550 70,558 85,558 93,545 101,525 109,505 116,495 124,490 150,490 155,500 163,515 170,530 178,550 186,556 194,565 205,572 215,568 232,555 248,555 262,535 280,500 295,490 350,490 370,515 390,530 410,532 425,540 436,565 444,580 460,592 475,598 510,598 520,585 535,585 550,590 565,580 575,562 583,535 590,510 600,488 610,485 622,505 640,515 660,498 675,505 690,530 705,550 715,555 725,548 740,553 750,562 760,575 775,590 790,605 1040,610",
    signal: "38,498 60,515 100,543 130,535 160,500 175,497 200,520 235,558 260,558 290,530 330,492 350,490 400,508 440,530 470,565 500,590 530,592 580,570 620,520 655,500 680,500 720,530 805,590 830,606"
  }
};

const STEP = 7.77; // distance between two candles

function parse(points) {
  return points.split(" ").map(p => p.split(",").map(Number));
}

// values of a keyed series at every candle
function resample(keys) {
  const out = [];
  let k = 0;
  for (let x = keys[0][0]; x <= keys[keys.length - 1][0] + 1; x += STEP) {
    while (k < keys.length - 2 && keys[k + 1][0] < x) k++;
    const a = keys[k], b = keys[k + 1];
    let t = Math.min(1, (x - a[0]) / (b[0] - a[0]));
    if (b[0] - a[0] < 10) t = Math.round(t);
    out.push([x].concat(a.slice(1).map((v, i) => v + (b[i + 1] - v) * t)));
  }
  return out;
}

// catmull-rom through the points
function curve(points) {
  const p = parse(points);
  let d = `M${p[0]}`;
  for (let i = 0; i < p.length - 1; i++) {
    const a = p[i - 1] || p[i], b = p[i], c = p[i + 1], e = p[i + 2] || c;
    d += `C${b[0] + (c[0] - a[0]) / 6},${b[1] + (c[1] - a[1]) / 6} ${c[0] - (e[0] - b[0]) / 6},${c[1] - (e[1] - b[1]) / 6} ${c}`;
  }
  return d;
}

function drawCandles(c) {
  const keys = c.candles.split(",").map(s => s.split(" ").map(Number));
  let s = "", prev = null;
  resample(keys).forEach(([x, hi, lo], i) => {
    const mid = (hi + lo) / 2;
    const down = prev !== null ? mid > prev : false;
    const h = lo - hi;
    const top = hi + h * (i % 3 ? 0.2 : 0.32), body = h * (i % 2 ? 0.5 : 0.6);
    const wick = c.bright ? "#00e800" : "#00c800";
    s += `<path d="M${x} ${hi}V${lo}" stroke="${wick}" stroke-width="${c.bright ? 2 : 3}"/>`;
    s += `<rect x="${x - 2.5}" y="${top}" width="5" height="${body}" fill="${down ? "#c0ffc0" : c.bright ? "#00d000" : "#008000"}" stroke="${wick}" stroke-width="1.4"/>`;
    prev = mid;
  });
  return s;
}

function draw(id) {
  const c = charts[id];
  const end = c.bottom;
  let s = "";

  for (let i = 0; i < 20; i++) {
    const x = c.gridX + i * 62.15;
    s += `<path class="grid" d="M${x} ${c.top}V${end}"/>`;
  }
  c.rows.forEach((y, i) => {
    s += `<path class="grid" d="M${c.left} ${y}H${c.right}"/><path class="frame" d="M${c.right} ${y}h8"/>`;
    if (c.prices[i]) s += `<text x="${c.right + 10}" y="${y + 6}">${c.prices[i]}</text>`;
  });
  (c.extra || []).forEach(([t, y]) => s += `<text x="${c.right + 10}" y="${y + 6}">${t}</text>`);

  s += `<path class="last" d="M${c.left} ${c.last[0]}H${c.right}"/>`;
  s += drawCandles(c);
  c.lines.forEach(([color, pts]) => {
    const d = c.smooth ? curve(pts) : "M" + pts;
    s += `<path class="line" stroke="${color}" d="${d}"/>`;
  });

  if (c.macd) {
    resample(parse(c.macd)).forEach(([x, y]) => {
      s += `<path d="M${x} 560V${y}" stroke="#858585" stroke-width="3.4"/>`;
    });
    s += `<path class="line" stroke="#b8b010" stroke-dasharray="7 4" d="${curve(c.signal)}"/>`;
  }
  (c.volumes || []).forEach(([x, y, color]) => s += `<path d="M${x} ${y}V720" stroke="${color}" stroke-width="5"/>`);

  s += `<path class="frame" d="M${c.left} ${end}V${c.top}H${c.right}V${end}z"/>`;
  (c.splits || []).forEach(y => s += `<path class="split" d="M${c.left} ${y}H${c.right + 4}"/>`);
  (c.notes || []).forEach(([t, y]) => {
    s += `<rect x="${c.left + 3}" y="${y - 16}" width="${t.length * 9}" height="20" fill="#000"/>`;
    s += `<text x="${c.left + 5}" y="${y}">${t}</text>`;
  });

  (c.times || []).forEach((t, i) => {
    const x = c.left - 2 + i * 124.3;
    s += `<path class="frame" d="M${x + 1} ${end}v9"/><text x="${x}" y="690">${t}</text>`;
  });

  s += `<path d="M${c.right - 264} ${c.top + 1}h20l-10 9z" fill="#a9bccf"/>`;
  s += `<rect x="${c.right + 5}" y="${c.last[0] - 10}" width="74" height="20" fill="#8797ab"/>`;
  s += `<text class="quote" x="${c.right + 10}" y="${c.last[0] + 6}">${c.last[1]}</text>`;

  s += `<rect x="${c.left + 5}" y="${c.top + 6}" width="170" height="26" fill="#000"/>`;
  s += `<use href="#i-depth" x="${c.left + 7}" y="${c.top + 8}" width="28" height="22"/>`;
  s += `<use href="#i-trade" x="${c.left + 40}" y="${c.top + 8}" width="30" height="22"/>`;
  s += `<text x="${c.left + 79}" y="${c.top + 25}">${c.name}</text>`;

  document.getElementById(id).innerHTML = s;
}

Object.keys(charts).forEach(draw);
```
